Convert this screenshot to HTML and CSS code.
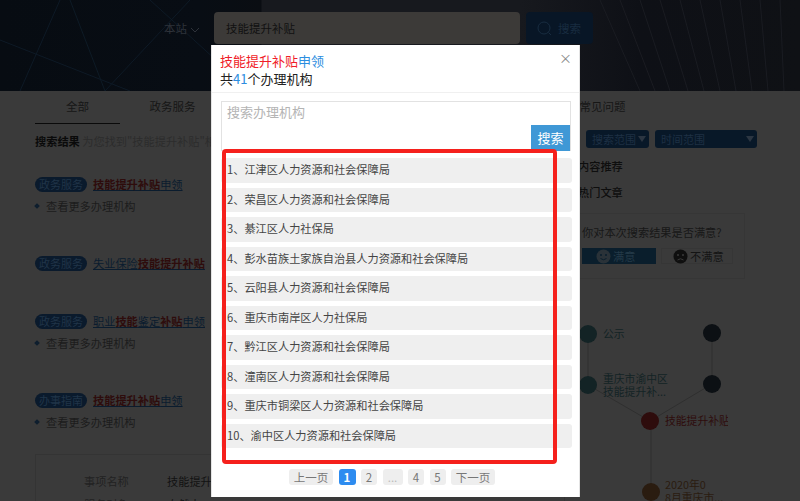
FILE: index.html
```html
<!DOCTYPE html>
<html lang="zh-CN">

<head>
    <meta charset="UTF-8">
    <meta name="viewport" content="width=device-width, initial-scale=1.0">
    <title>搜索结果</title>
    <link rel="stylesheet" href="styles.css">
</head>

<body>
    <div class="page">
        <div class="banner">
            <svg class="banner-art" width="800" height="91" viewBox="0 0 800 91" aria-hidden="true">
                <g stroke="#0e1a26" stroke-width="1" fill="none">
                    <path d="M20 91 L60 0"></path>
                    <path d="M0 40 L130 91"></path>
                    <path d="M70 0 L105 91"></path>
                    <path d="M105 91 L190 0"></path>
                    <path d="M150 0 L250 91"></path>
                </g>
                <g stroke="#1a1c22" stroke-width="1" fill="none">
                    <path d="M600 0 L640 91"></path>
                    <path d="M620 0 L655 91"></path>
                    <path d="M640 0 L670 91"></path>
                    <path d="M660 0 L688 91"></path>
                    <path d="M680 0 L704 91"></path>
                    <path d="M700 0 L720 91"></path>
                    <path d="M720 0 L736 91"></path>
                    <path d="M740 0 L752 91"></path>
                    <path d="M760 0 L768 91"></path>
                    <path d="M780 0 L784 91"></path>
                </g>
            </svg>
            <div class="search-bar">
                <span class="scope">本站
                    <svg width="10" height="6" viewBox="0 0 10 6"><path d="M1 1 L5 5 L9 1" fill="none" stroke="#2e323a" stroke-width="1"></path></svg>
                </span>
                <div class="search-input">技能提升补贴</div>
                <div class="search-btn">
                    <svg width="15" height="15" viewBox="0 0 15 15"><circle cx="7" cy="7" r="6" fill="none" stroke="#182c40" stroke-width="1"></circle><path d="M11.5 11.5 L14 14" stroke="#182c40" stroke-width="1"></path></svg>
                    搜索
                </div>
            </div>
        </div>

        <div class="content">
            <div class="tabs">
                <div class="tab active">全部</div>
                <div class="tab">政务服务</div>
                <div class="tab tab-last">常见问题</div>
            </div>

            <div class="columns">
                <div class="results">
                    <div class="result-count"><b>搜索结果</b> 为您找到"技能提升补贴"相关结果</div>

                    <div class="result">
                        <div class="result-title"><span class="tag">政务服务</span><a class="link"><em>技能提升补贴</em>申领</a></div>
                        <div class="more"><i class="pin"></i>查看更多办理机构</div>
                    </div>
                    <div class="result">
                        <div class="result-title"><span class="tag">政务服务</span><a class="link">失业保险<em>技能提升补贴</em></a></div>
                    </div>
                    <div class="result">
                        <div class="result-title"><span class="tag">政务服务</span><a class="link">职业<em>技能</em>鉴定<em>补贴</em>申领</a></div>
                        <div class="more"><i class="pin"></i>查看更多办理机构</div>
                    </div>
                    <div class="result result-last">
                        <div class="result-title"><span class="tag">办事指南</span><a class="link"><em>技能提升补贴</em>申领</a></div>
                        <div class="more"><i class="pin"></i>查看更多办理机构</div>
                    </div>

                    <div class="detail">
                        <div class="detail-row"><span class="detail-key">事项名称</span><span>技能提升补贴申领</span></div>
                        <div class="detail-row"><span class="detail-key">服务对象</span><span>自然人</span></div>
                    </div>
                </div>

                <div class="side">
                    <div class="filters">
                        <div class="filter">搜索范围<i class="caret"></i></div>
                        <div class="filter filter-wide">时间范围<i class="caret"></i></div>
                    </div>
                    <div class="side-title">内容推荐</div>
                    <div class="side-title">热门文章</div>
                    <div class="survey">
                        <div class="survey-text">你对本次搜索结果是否满意?</div>
                        <div class="survey-btns">
                            <div class="vote vote-yes">
                                <svg width="15" height="15" viewBox="0 0 15 15"><circle cx="7.5" cy="7.5" r="7" fill="#2a3238"></circle><circle cx="5" cy="6" r="1" fill="#0a1e2c"></circle><circle cx="10" cy="6" r="1" fill="#0a1e2c"></circle><path d="M4.5 9.5 Q7.5 12 10.5 9.5" fill="none" stroke="#0a1e2c" stroke-width="1"></path></svg>
                                满意
                            </div>
                            <div class="vote">
                                <svg width="15" height="15" viewBox="0 0 15 15"><circle cx="7.5" cy="7.5" r="7" fill="#0f0f0f"></circle><circle cx="5" cy="6" r="1" fill="#3a3a3a"></circle><circle cx="10" cy="6" r="1" fill="#3a3a3a"></circle><path d="M4.5 11 Q7.5 8.5 10.5 11" fill="none" stroke="#3a3a3a" stroke-width="1"></path></svg>
                                不满意
                            </div>
                        </div>
                    </div>
                    <svg class="graph" width="163" height="201" viewBox="565 300 163 201">
                        <g stroke="#2f2f2f" stroke-width="1" fill="none">
                            <path d="M588 334 L588 385 L650 421 L712 384 L712 333"></path>
                            <path d="M651 421 L651 492"></path>
                        </g>
                        <circle cx="588" cy="334" r="9" fill="#132325"></circle>
                        <circle cx="588" cy="385" r="9" fill="#132325"></circle>
                        <circle cx="712" cy="333" r="9" fill="#0c1014"></circle>
                        <circle cx="712" cy="384" r="9" fill="#0c1014"></circle>
                        <circle cx="650" cy="421" r="9" fill="#2e0c0c"></circle>
                        <circle cx="651" cy="492" r="9" fill="#2a1c10"></circle>
                        <g font-size="10.8">
                            <text x="603" y="338" fill="#132325">公示</text>
                            <text x="603" y="383" fill="#132325">重庆市渝中区</text>
                            <text x="603" y="396" fill="#132325">技能提升补...</text>
                            <text x="665" y="425" fill="#2e0c0c">技能提升补贴</text>
                            <text x="665" y="489" fill="#2a1c10">2020年0</text>
                            <text x="665" y="502" fill="#2a1c10">8月重庆市...</text>
                        </g>
                    </svg>
                </div>
            </div>
        </div>

        <div class="modal">
            <div class="modal-head">
                <span class="modal-close">×</span>
                <div><span class="red">技能提升补贴</span><span class="blue">申领</span></div>
                <div>共<span class="blue">41</span>个办理机构</div>
            </div>
            <div class="modal-search">
                <div class="placeholder">搜索办理机构</div>
                <div class="modal-search-btn">搜索</div>
            </div>
            <ul class="org-list">
                <li>1、江津区人力资源和社会保障局</li>
                <li>2、荣昌区人力资源和社会保障局</li>
                <li>3、綦江区人力社保局</li>
                <li>4、彭水苗族土家族自治县人力资源和社会保障局</li>
                <li>5、云阳县人力资源和社会保障局</li>
                <li>6、重庆市南岸区人力社保局</li>
                <li>7、黔江区人力资源和社会保障局</li>
                <li>8、潼南区人力资源和社会保障局</li>
                <li>9、重庆市铜梁区人力资源和社会保障局</li>
                <li>10、渝中区人力资源和社会保障局</li>
            </ul>
            <div class="pager">
                <span class="pg pg-text">上一页</span>
                <span class="pg pg-on">1</span>
                <span class="pg">2</span>
                <span class="pg pg-dots">...</span>
                <span class="pg">4</span>
                <span class="pg">5</span>
                <span class="pg pg-text">下一页</span>
            </div>
            <div class="red-box"></div>
        </div>
    </div>
</body>

</html>
```

FILE: styles.css
```css
* {
    box-sizing: border-box;
}

body {
    margin: 0;
    padding: 0;
    background-color: #3a3a3a;
    color: #0e0e0e;
    font-family: "Noto Sans CJK SC", "Liberation Sans", sans-serif;
    font-size: 11.2px;
    overflow: hidden;
}

.page {
    position: relative;
    width: 800px;
    height: 501px;
    overflow: hidden;
}

/* banner */
.banner {
    position: relative;
    height: 91px;
    background: linear-gradient(90deg, #070c12 0, #080d14 200px, #0a0d12 261px, #17191e 262px, #17191e 520px, #0e1016 640px, #0f1115 800px);
}

.banner-art {
    position: absolute;
    left: 0;
    top: 0;
}

.search-bar {
    position: relative;
    display: flex;
    align-items: center;
    padding: 12px 0 0 164px;
}

.scope {
    width: 50px;
    color: #2e323a;
    font-size: 11.5px;
}

.search-input {
    width: 306px;
    height: 32px;
    line-height: 32px;
    padding-left: 12px;
    background-color: #3c3a38;
    border-radius: 4px;
    color: #111;
    font-size: 11.5px;
}

.search-btn {
    display: flex;
    align-items: center;
    gap: 6px;
    width: 67px;
    height: 32px;
    margin-left: 6px;
    padding-left: 11px;
    background-color: #081626;
    border-radius: 4px;
    color: #182c40;
    font-size: 11.5px;
}

/* tabs */
.content {
    padding-left: 35px;
}

.tabs {
    display: flex;
    height: 33px;
    width: 591px;
    font-size: 11.5px;
}

.tab {
    width: 85px;
    line-height: 30px;
    text-align: center;
    color: #161616;
}

.tab.active {
    border-bottom: 1px solid #0a0a0a;
    height: 33px;
}

.tab:nth-child(2) {
    margin-left: 10px;
}

.tab-last {
    width: 47px;
    margin-left: auto;
    white-space: nowrap;
}

.columns {
    display: flex;
}

/* results */
.results {
    width: 530px;
}

.result-count {
    height: 49px;
    padding-top: 9px;
    color: #2c2c2c;
}

.result-count b {
    color: #0a0a0a;
}

.result {
    height: 79px;
}

.result-title {
    display: flex;
    align-items: center;
    gap: 6px;
    height: 22px;
    font-size: 11.2px;
}

.result-last {
    height: 65px;
}

.tag {
    width: 52px;
    height: 15px;
    line-height: 15px;
    text-align: center;
    background-color: #0a1a2c;
    border-radius: 8px;
    color: #203448;
    font-size: 11px;
}

.link {
    color: #0a1c2e;
    text-decoration: underline;
    font-weight: 400;
}

.link em {
    color: #2e0c0c;
    font-style: normal;
    font-weight: 600;
}

.more {
    display: flex;
    align-items: center;
    height: 21px;
    color: #1c1c1c;
}

.pin {
    width: 4px;
    height: 4px;
    margin: 0 7px 0 0;
    background-color: #0e1e2e;
    transform: rotate(45deg);
}

.result:nth-child(3) {
    height: 58px;
}

.detail {
    height: 70px;
    padding: 15px 0 0 48px;
    border: 1px solid #343434;
}

.detail-row {
    display: flex;
    height: 23px;
    line-height: 23px;
    color: #121212;
}

.detail-key {
    width: 83px;
    color: #222;
}

/* right side */
.side {
    width: 200px;
}

.filters {
    display: flex;
    gap: 6px;
    height: 29px;
    padding: 6px 0 0 21px;
}

.filter {
    position: relative;
    width: 63px;
    height: 18px;
    line-height: 18px;
    padding-left: 6px;
    background-color: #081828;
    border-radius: 3px;
    color: #1e3044;
    font-size: 11px;
}

.filter-wide {
    width: 102px;
}

.caret {
    position: absolute;
    right: 3px;
    top: 6px;
    border-top: 6px solid #2c3642;
    border-left: 4px solid transparent;
    border-right: 4px solid transparent;
}

.side-title {
    height: 26px;
    padding-left: 13px;
    line-height: 26px;
    font-weight: 500;
    color: #0e0e0e;
}

.survey {
    width: 180px;
    height: 66px;
    margin-top: 8px;
    padding: 10px 0 0 16px;
    border: 1px solid #363636;
    color: #171717;
}

.survey-btns {
    display: flex;
    gap: 5px;
    margin-top: 8px;
}

.vote {
    display: flex;
    align-items: center;
    gap: 2px;
    width: 72px;
    height: 16px;
    padding-left: 11px;
    border: 1px solid #363636;
    color: #141414;
}

.vote-yes {
    width: 74px;
    padding-left: 14px;
    background-color: #0a1e2c;
    border: none;
    color: #243a48;
}

.graph {
    position: absolute;
    left: 565px;
    top: 300px;
    font-family: "Noto Sans CJK SC", "Liberation Sans", sans-serif;
}

/* modal */
.modal {
    position: absolute;
    left: 211px;
    top: 45px;
    width: 369px;
    height: 452px;
    background-color: #fff;
    border: 1px solid #e4e4e4;
    border-width: 0 1px 0 1px;
}

.modal-head {
    position: relative;
    height: 48px;
    padding: 7px 8px 0;
    border-bottom: 1px solid #f0f0f0;
    font-size: 13px;
    line-height: 17.5px;
    color: #222;
}

.modal-close {
    position: absolute;
    right: 7px;
    top: 4px;
    color: #888;
    font-size: 13px;
    line-height: 17px;
}

.red {
    color: #f01c28;
}

.blue {
    color: #2c8de0;
}

.modal-search {
    position: relative;
    height: 50px;
    margin: 8px 8px 0 9px;
    padding: 0 5px;
    border: 1px solid #e2e2e2;
    color: #b4b4b4;
    font-size: 13px;
}

.modal-search-btn {
    position: absolute;
    right: 0;
    bottom: -1px;
    width: 39px;
    height: 26px;
    line-height: 26px;
    text-align: center;
    background-color: #3f98d6;
    color: #fff;
}

.org-list {
    list-style: none;
    display: flex;
    flex-direction: column;
    gap: 5px;
    height: 311px;
    margin: 7px 7px 0 9px;
    padding: 0;
}

.org-list li {
    height: 24.5px;
    line-height: 23.5px;
    padding-left: 6px;
    background-color: #efefef;
    border-radius: 3px;
    color: #444;
}

.pager {
    display: flex;
    justify-content: center;
    gap: 5.5px;
    padding-right: 7px;
}

.pg {
    min-width: 16px;
    height: 16px;
    line-height: 16px;
    text-align: center;
    background-color: #eee;
    border-radius: 3px;
    color: #777;
    font-size: 11.5px;
}

.pg-text {
    width: 44px;
}

.pg-on {
    width: 17px;
    background-color: #2d8cf0;
    color: #fff;
    font-weight: 600;
}

.pg-dots {
    width: 20px;
    color: #bbb;
}

.red-box {
    position: absolute;
    left: 10px;
    top: 104px;
    width: 335px;
    height: 315px;
    border: 4px solid #f5201c;
    border-radius: 4px;
}
```
